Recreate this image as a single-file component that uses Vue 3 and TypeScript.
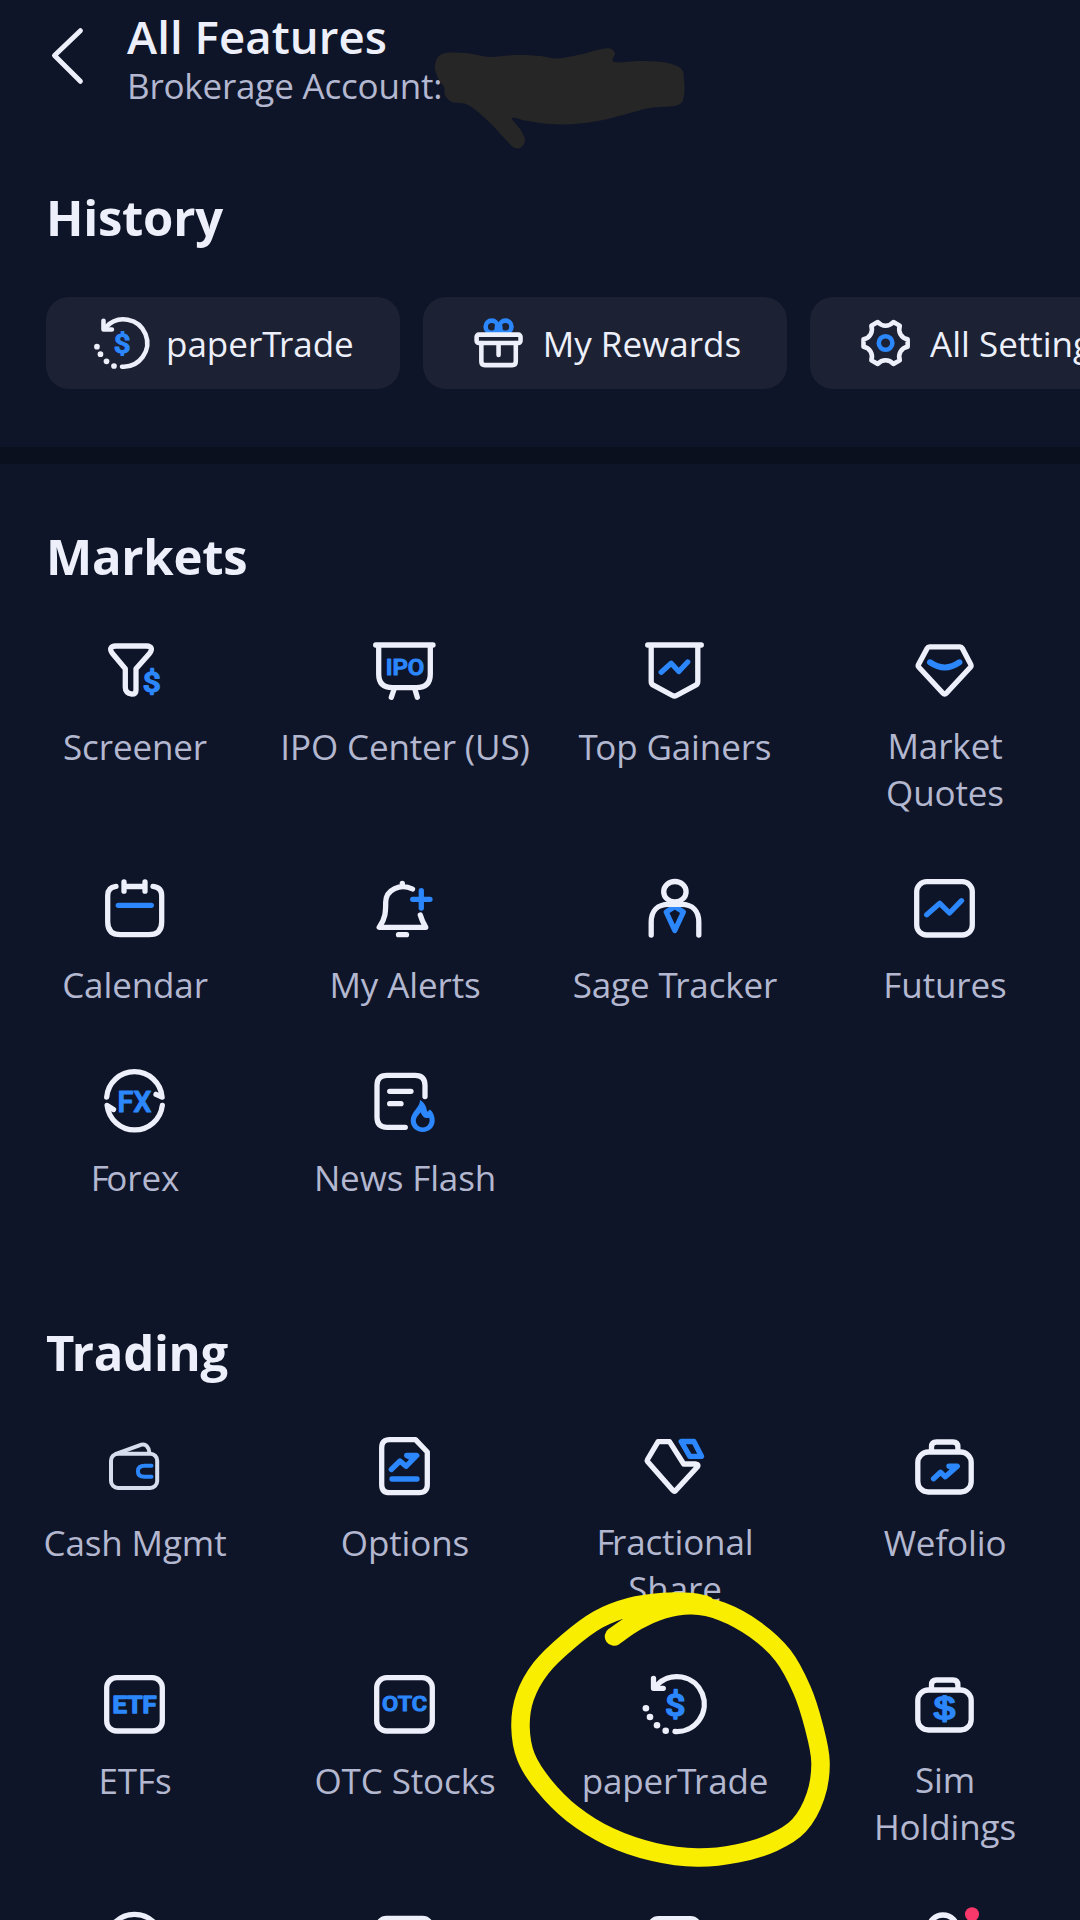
<script setup lang="ts">
interface Feature {
  icon: string
  label?: string
}

interface Section {
  title: string
  items: Feature[]
}

type Point = [number, number]

const history: Feature[] = [
  { icon: 'paper', label: 'paperTrade' },
  { icon: 'gift', label: 'My Rewards' },
  { icon: 'gear', label: 'All Settings' },
]

const sections: Section[] = [
  {
    title: 'Markets',
    items: [
      { icon: 'screener', label: 'Screener' },
      { icon: 'ipo', label: 'IPO Center (US)' },
      { icon: 'gainers', label: 'Top Gainers' },
      { icon: 'quotes', label: 'Market\nQuotes' },
      { icon: 'calendar', label: 'Calendar' },
      { icon: 'alerts', label: 'My Alerts' },
      { icon: 'sage', label: 'Sage Tracker' },
      { icon: 'futures', label: 'Futures' },
      { icon: 'forex', label: 'Forex' },
      { icon: 'news', label: 'News Flash' },
    ],
  },
  {
    title: 'Trading',
    items: [
      { icon: 'cash', label: 'Cash Mgmt' },
      { icon: 'options', label: 'Options' },
      { icon: 'fractional', label: 'Fractional\nShare' },
      { icon: 'wefolio', label: 'Wefolio' },
      { icon: 'etf', label: 'ETFs' },
      { icon: 'otc', label: 'OTC Stocks' },
      { icon: 'paper', label: 'paperTrade' },
      { icon: 'sim', label: 'Sim\nHoldings' },
      { icon: 'round' },
      { icon: 'panel' },
      { icon: 'card' },
      { icon: 'person' },
    ],
  },
]

const isDouble = (label: string): boolean => label.includes('\n')

// Splits out capitals that should tuck over the following round letter
const kernParts = (text: string): string[] => text.split(/([TF](?=[ro]))/).filter(Boolean)
const isKerned = (part: string): boolean => part === 'T' || part === 'F'

// Six-toothed gear outline centred on the origin
const gearPath = ((): string => {
  const at = (deg: number, r: number): string => {
    const a = (deg * Math.PI) / 180
    return `${(r * Math.cos(a)).toFixed(2)} ${(r * Math.sin(a)).toFixed(2)}`
  }
  let d = `M${at(-9.5, 26)}`
  for (let k = 0; k < 6; k++) {
    const t = k * 60
    d += ` L${at(t + 9.5, 26)} C${at(t + 18, 19)} ${at(t + 42, 19)} ${at(t + 50.5, 26)}`
  }
  return d + 'Z'
})()

// Smooth curve through a list of points (Catmull-Rom to Bezier)
function smooth(points: Point[], closed = false): string {
  const n = points.length
  const get = (i: number): Point =>
    closed ? points[(i + n) % n] : points[Math.min(Math.max(i, 0), n - 1)]
  let d = `M${points[0][0]} ${points[0][1]}`
  const last = closed ? n : n - 1
  for (let i = 0; i < last; i++) {
    const [p0, p1, p2, p3] = [get(i - 1), get(i), get(i + 1), get(i + 2)]
    d += ` C${(p1[0] + (p2[0] - p0[0]) / 6).toFixed(1)} ${(p1[1] + (p2[1] - p0[1]) / 6).toFixed(1)}`
    d += ` ${(p2[0] - (p3[0] - p1[0]) / 6).toFixed(1)} ${(p2[1] - (p3[1] - p1[1]) / 6).toFixed(1)}`
    d += ` ${p2[0]} ${p2[1]}`
  }
  return d
}

const circleStroke = smooth([
  [614, 1636.5], [637, 1621], [663, 1609.5], [692, 1605.3], [722, 1611.5], [755, 1629.5],
  [783, 1655.5], [802, 1690], [814, 1727], [820.5, 1762], [815.5, 1796], [799, 1825.5],
  [773, 1842.5], [737, 1853.5], [697, 1857.5], [654, 1852], [610, 1837], [572, 1813.5],
  [544, 1785.5], [526, 1757], [520.5, 1727], [525, 1697], [541, 1668], [568, 1641.5],
  [598, 1619.5], [630, 1607], [663, 1602], [690, 1602], [706, 1605],
])

const redaction = smooth([
  [438, 78], [435, 65], [442, 54], [465, 53], [490, 57], [515, 55], [540, 56], [557, 58.5],
  [578, 55], [600, 49.5], [610, 48.5], [615, 53], [614, 62], [640, 61], [665, 62.5], [681, 68.5],
  [684, 80], [684, 95], [678, 105], [650, 108], [630, 113], [603, 120], [575, 124],
  [550, 124], [528, 121], [512, 118], [520, 129], [525, 140], [521, 147.5], [514, 147.5],
  [507, 141], [493, 126], [478, 112], [466, 104], [452, 102], [445, 95], [444, 87],
], true)
</script>

<template>
  <main class="screen">
    <header class="header">
      <svg class="back" width="40" height="60" viewBox="0 0 40 60">
        <path d="M33.4 5.7 7.5 30.5 33.4 56.3" />
      </svg>
      <div class="heading">
        <h1>All Features</h1>
        <p>Brokerage Account:</p>
      </div>
    </header>

    <section class="history">
      <h2>History</h2>
      <div class="chips">
        <div v-for="chip in history" :key="chip.label" class="chip">
          <svg class="icon" viewBox="-35.5 -36 72 72">
            <template v-if="chip.icon === 'paper'">
              <path d="M.5 27.5A27.5 27.5 0 1 0 -18 -18.5L-20 -16.7" />
              <path d="M-21 -25.7V-15.7H-11.2" />
              <g class="dots">
                <circle cx="-28.6" cy="4.3" r="3.3" />
                <circle cx="-24.5" cy="13" r="3.3" />
                <circle cx="-17.5" cy="21.3" r="3.3" />
                <circle cx="-8.8" cy="26.7" r="3.3" />
              </g>
              <text x=".8" y="11.7" class="dollar" textLength="19.5" lengthAdjust="spacingAndGlyphs">$</text>
            </template>
            <template v-else-if="chip.icon === 'gift'">
              <g class="blue">
                <circle cx="-8" cy="-19" r="7" />
                <circle cx="8" cy="-19" r="7" />
                <path d="M-2 -19V-12M2 -19V-12" />
              </g>
              <rect x="-25.5" y="-9.7" width="51" height="9.6" rx="2.5" />
              <path d="M-20 0V21.5Q-20 25.7 -15.8 25.7H15.8Q20 25.7 20 21.5V0M0 2V13.8" />
            </template>
            <template v-else>
              <path :d="gearPath" />
              <circle class="blue" r="7.9" />
            </template>
          </svg>
          <span class="chip-label"><span v-for="(part, p) in kernParts(chip.label ?? '')" :key="p" :class="{ kern: isKerned(part) }">{{ part }}</span></span>
        </div>
      </div>
    </section>

    <div class="divider" />

    <section v-for="section in sections" :key="section.title" class="section">
      <h2><span v-for="(part, p) in kernParts(section.title)" :key="p" :class="{ kern: isKerned(part) }">{{ part }}</span></h2>
      <div class="grid">
        <div v-for="(item, i) in section.items" :key="i" class="item">
          <svg class="icon" viewBox="-35.5 -36 72 72">
            <template v-if="item.icon === 'screener'">
              <path d="M-18.5 -24H12Q20 -23.5 15 -16.5L1.5 -1.2V20Q1.5 24.2 -2.5 24.2Q-9.2 23 -9.2 17.5V-1.2L-22 -16.5Q-27 -23.5 -18.5 -24Z" />
              <text x="17.2" y="22" class="dollar small" textLength="18" lengthAdjust="spacingAndGlyphs">$</text>
            </template>

            <template v-else-if="item.icon === 'ipo'">
              <path d="M-28.8 -25H28.5M-25.8 -25V4Q-25.8 17.7 -12 17.7H12Q25.8 17.7 25.8 4V-25M-10.5 19.5L-13.2 27.3M10.5 19.5L12.8 27.3" />
              <text x=".4" y="4.8" class="word" font-size="22.5" textLength="38.5" lengthAdjust="spacingAndGlyphs">IPO</text>
            </template>

            <template v-else-if="item.icon === 'gainers'">
              <path d="M-26.8 -25H26.8M-23.3 -25V11.5Q-23.3 14 -21.2 15.2L-2 25.5Q0 26.6 2 25.5L21.2 15.2Q23.3 14 23.3 11.5V-25" />
              <path class="blue" d="M-13.3 2.3L-3.3 -6.8L4.3 1.5L13.2 -8" />
            </template>

            <template v-else-if="item.icon === 'quotes'">
              <path d="M-15 -23.2H15.5Q17 -23.2 17.8 -21.8L26.3 -5.5Q27 -4 25.9 -2.8L1.8 23.2Q.2 25 -1.5 23.2L-25.6 -2.8Q-26.8 -4 -26 -5.5L-17.3 -21.8Q-16.5 -23.2 -15 -23.2Z" />
              <path class="blue bold" d="M-14.5 -7.7Q.2 2.6 14.9 -7.7" />
            </template>

            <template v-else-if="item.icon === 'calendar'">
              <path d="M-18.5 -21.7Q-26.8 -20.8 -26.8 -12.5V14Q-26.8 26.7 -14 26.7H14.4Q27.2 26.7 27.2 14V-12.5Q27.2 -20.8 18.5 -21.7M-10.5 -26V-16.8M10.5 -26V-16.8M-10.5 -21.5H10.5" />
              <path class="blue" d="M-16.2 -2.7H16.8" />
            </template>

            <template v-else-if="item.icon === 'alerts'">
              <path d="M8 -19C-4 -25 -18.5 -18.5 -18.8 -6C-18.8 4 -19 10.5 -25.3 19.3H21.3Q17.5 13 15.8 7M-2.2 -24.5V-22M-6 26.7H2" />
              <path class="blue" d="M8.2 -8.7H25.5M16.8 -17.3V0" />
            </template>

            <template v-else-if="item.icon === 'sage'">
              <path class="blue" d="M.3 -1.5L-8.3 4L.3 22.5L8.9 4Z" />
              <ellipse cx=".4" cy="-16.3" rx="11.2" ry="10.2" />
              <path d="M-23.3 27V14C-23.3 3 -17 -3.7 -6 -3.7H7C18 -3.7 24.3 3 24.3 14V27" />
            </template>

            <template v-else-if="item.icon === 'futures'">
              <rect x="-27.8" y="-26.4" width="55.6" height="53.4" rx="10" />
              <path class="blue" d="M-17.8 6.7L-4.7 -4.7L5 5L17 -7.3" />
            </template>

            <template v-else-if="item.icon === 'forex'">
              <path d="M-27.8 -3.9A27.8 27.8 0 0 1 27.6 -3.9L21.5 -6.7M27.8 4.5A27.8 27.8 0 0 1 -27.4 4.5L-21 8.5" />
              <text x="0" y="11.2" class="word" font-size="29.5" textLength="34" lengthAdjust="spacingAndGlyphs">FX</text>
            </template>

            <template v-else-if="item.icon === 'news'">
              <path d="M20.5 -4.5V-15.7Q20.5 -25.7 10.5 -25.7H-17.5Q-27.5 -25.7 -27.5 -15.7V16.3Q-27.5 26.3 -17.5 26.3H.8M-14.8 -9.7H6.5M-14.8 2.7H-3.5" />
              <path
                class="flame"
                d="M15.5 -1C16 6 6.2 11 6.2 19.5C6.2 26 11.5 31 18.2 31C25 31 30.2 26 30.2 19.5C30.2 15 28.5 11 25.5 8.6L22.7 10.8C22 6 20 1.5 15.5 -1ZM16.2 11.3C14 14 11.3 16.5 11.3 19.7A6.9 6.7 0 0 0 25.1 19.7C25.1 18.5 25 17.5 24.6 16.7C21 18.2 17.5 15.5 16.2 11.3Z"
              />
            </template>

            <g v-else-if="item.icon === 'cash'" class="thin">
              <rect x="-23.5" y="-12.3" width="46.2" height="34.3" rx="7" />
              <path d="M-18.5 -12.2L7 -21.3C11 -22.5 14.5 -19 15 -13" />
              <path class="blue" d="M17 -.3H10Q3.4 -.3 3.4 5.2Q3.4 10.7 10 10.7H17" />
            </g>

            <template v-else-if="item.icon === 'options'">
              <path d="M11 -26.3H-14.8Q-22.8 -26.3 -22.8 -18.3V18.7Q-22.8 26.7 -14.8 26.7H14.8Q22.8 26.7 22.8 18.7V-14Z" />
              <path class="blue" d="M-13.2 3.5L-4.5 -5L1.5 .3L12.3 -10.5H2.2L6.5 -8.5M-12.5 13H12.5" />
            </template>

            <template v-else-if="item.icon === 'fractional'">
              <path d="M-16.4 -24.3H-5L9.2 -2H21.5Q24.5 -1.5 23 .8L1.2 24.5Q-.2 25.8 -1.5 24.5L-27 -4.5Q-27.6 -5.5 -27 -6.5Z" />
              <path class="blue" d="M6.7 -24.5H19.4L27 -9.7H15.3Z" />
            </template>

            <template v-else-if="item.icon === 'wefolio' || item.icon === 'sim'">
              <rect x="-26.7" y="-14" width="53.4" height="40" rx="10.5" />
              <path d="M-13 -15V-19Q-13 -24 -8 -24H8.4Q13.4 -24 13.4 -19V-15" />
              <path v-if="item.icon === 'wefolio'" class="blue" d="M-11 12.8L-4 6.2L.8 10.8L12.8 .2H4.4L8.5 1.8" />
              <text v-else x="0" y="15" class="dollar barred" textLength="21" lengthAdjust="spacingAndGlyphs">$</text>
            </template>

            <template v-else-if="item.icon === 'etf' || item.icon === 'otc'">
              <rect x="-27.8" y="-26.4" width="55.6" height="53.4" rx="10" />
              <text v-if="item.icon === 'etf'" x="0" y="8.8" class="word heavy" font-size="23" textLength="44" lengthAdjust="spacingAndGlyphs">ETF</text>
              <text v-else x="0" y="7.4" class="word" font-size="20.5" textLength="45" lengthAdjust="spacingAndGlyphs">OTC</text>
            </template>

            <template v-else-if="item.icon === 'paper'">
              <path d="M.5 27.5A27.5 27.5 0 1 0 -18 -18.5L-20 -16.7" />
              <path d="M-21 -25.7V-15.7H-11.2" />
              <g class="dots">
                <circle cx="-28.6" cy="4.3" r="3.3" />
                <circle cx="-24.5" cy="13" r="3.3" />
                <circle cx="-17.5" cy="21.3" r="3.3" />
                <circle cx="-8.8" cy="26.7" r="3.3" />
              </g>
              <text x=".8" y="11.7" class="dollar" textLength="20.5" lengthAdjust="spacingAndGlyphs">$</text>
            </template>

            <circle v-else-if="item.icon === 'round'" r="27.7" />
            <rect v-else-if="item.icon === 'panel'" x="-27" y="-23.6" width="54" height="50" rx="9" />
            <rect v-else-if="item.icon === 'card'" x="-25" y="-23.3" width="50" height="50" rx="9" />
            <template v-else>
              <circle cx="-1.5" cy="-12.5" r="14.5" />
              <circle class="badge" cx="27.5" cy="-27.7" r="7" />
            </template>
          </svg>
          <span v-if="item.label" class="label" :class="{ double: isDouble(item.label) }"><span v-for="(part, p) in kernParts(item.label)" :key="p" :class="{ kern: isKerned(part) }">{{ part }}</span></span>
        </div>
      </div>
    </section>

    <svg class="marks" width="1080" height="1920" viewBox="0 0 1080 1920">
      <path class="redaction" :d="redaction" />
      <path class="ring" :d="circleStroke" />
    </svg>
  </main>
</template>

<style>
body {
  margin: 0;
  background: #0f1528;
}
</style>

<style scoped>
.screen {
  position: relative;
  box-sizing: border-box;
  width: 1080px;
  height: 1920px;
  overflow: hidden;
  background: #0f1528;
  color: #edf0fa;
  font-family: 'Open Sans', 'Noto Sans', sans-serif;
}

h1,
h2,
p {
  margin: 0;
}

.header {
  display: flex;
  padding: 9px 0 0 47px;
}

.back {
  margin-top: 16px;
}

.back path {
  fill: none;
  stroke: #edf0fa;
  stroke-width: 5;
  stroke-linecap: round;
  stroke-linejoin: round;
}

.heading {
  margin-left: 40px;
}

h1 {
  font-size: 45.5px;
  font-weight: 600;
  line-height: 54px;
  letter-spacing: 0.08px;
}

.heading p {
  margin-top: -1px;
  font-size: 35px;
  line-height: 47px;
  letter-spacing: -0.2px;
  color: #b3b8d0;
}

h2 {
  padding-left: 46px;
  font-size: 49px;
  font-weight: 700;
  line-height: 66px;
  letter-spacing: -0.25px;
}

.kern {
  letter-spacing: -2.6px;
}

.history {
  padding: 75px 0 58px;
}

.chips {
  display: flex;
  gap: 23px;
  margin-top: 47px;
  padding-left: 46px;
}

.chip {
  display: flex;
  flex: none;
  align-items: center;
  gap: 13px;
  box-sizing: border-box;
  height: 92px;
  padding: 0 46px 0 45px;
  border-radius: 23px;
  background: #1c2133;
  font-size: 35px;
  line-height: 49px;
  white-space: nowrap;
}

.chip .icon {
  width: 62px;
  height: 62px;
}

.divider {
  height: 17px;
  background: #0b101f;
}

.section {
  padding-top: 59px;
}

.section + .section {
  padding-top: 117px;
}

.grid {
  display: grid;
  grid-template-columns: repeat(4, 270px);
  row-gap: 56px;
  margin-top: 45px;
}

.item {
  display: flex;
  flex-direction: column;
  align-items: center;
}

.label {
  margin-top: 16px;
  font-size: 35px;
  line-height: 49px;
  letter-spacing: -0.12px;
  text-align: center;
  white-space: pre;
  color: #b3b8d0;
}

.label.double {
  line-height: 47px;
}

.icon {
  flex: none;
  width: 72px;
  height: 72px;
  overflow: visible;
  fill: none;
  stroke: #edf0fa;
  stroke-width: 5.3;
  stroke-linecap: round;
  stroke-linejoin: round;
}

.icon .blue {
  stroke: #2b87fb;
}

.icon .bold {
  stroke-width: 6;
}

.icon .flame {
  fill: #2b87fb;
  fill-rule: evenodd;
  stroke: none;
}

.icon .dots {
  fill: #edf0fa;
  stroke: none;
}

.icon .thin {
  stroke: #d6deee;
  stroke-width: 4;
}

.icon .badge {
  fill: #f8376b;
  stroke: none;
}

.icon text {
  font-family: Roboto, sans-serif;
  font-weight: 500;
  text-anchor: middle;
  fill: #2b87fb;
  stroke: #2b87fb;
}

.icon .word {
  stroke-width: 1.2;
}

.icon .heavy {
  stroke-width: 1.7;
}

.icon .dollar {
  font-size: 30.5px;
  stroke-width: 1.4;
}

.icon .small {
  font-size: 27px;
}

.icon .barred {
  font-family: 'Liberation Sans', sans-serif;
  font-size: 31px;
  font-weight: 400;
  stroke-width: 2;
}

.marks {
  position: absolute;
  inset: 0;
  pointer-events: none;
}

.redaction {
  fill: #262626;
}

.ring {
  fill: none;
  stroke: #f9ed00;
  stroke-width: 18.5;
  stroke-linecap: round;
  stroke-linejoin: round;
}
</style>
